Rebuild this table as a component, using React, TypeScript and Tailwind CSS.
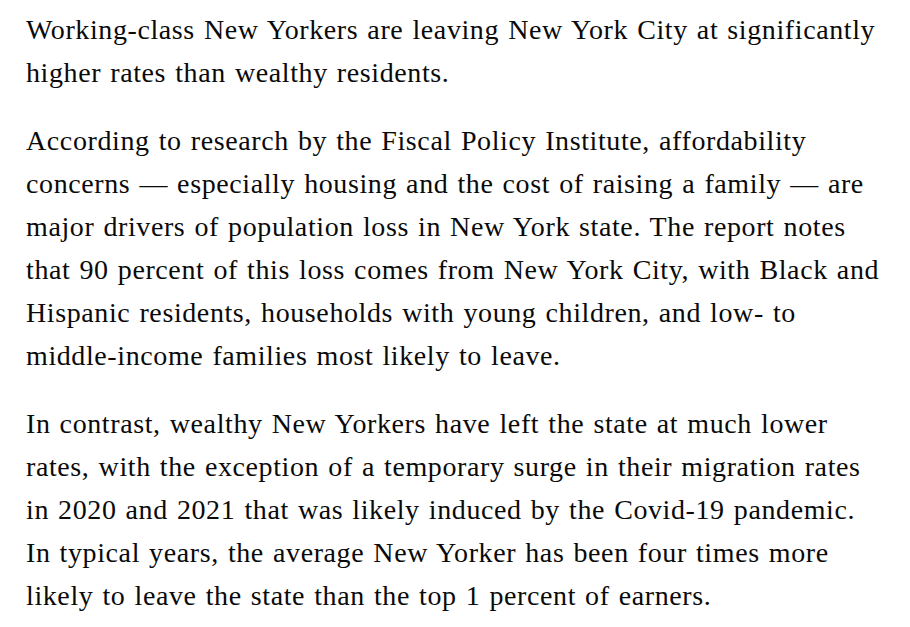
const paragraphs: string[][] = [
  [
    "Working-class New Yorkers are leaving New York City at significantly",
    "higher rates than wealthy residents.",
  ],
  [
    "According to research by the Fiscal Policy Institute, affordability",
    "concerns — especially housing and the cost of raising a family — are",
    "major drivers of population loss in New York state. The report notes",
    "that 90 percent of this loss comes from New York City, with Black and",
    "Hispanic residents, households with young children, and low- to",
    "middle-income families most likely to leave.",
  ],
  [
    "In contrast, wealthy New Yorkers have left the state at much lower",
    "rates, with the exception of a temporary surge in their migration rates",
    "in 2020 and 2021 that was likely induced by the Covid-19 pandemic.",
    "In typical years, the average New Yorker has been four times more",
    "likely to leave the state than the top 1 percent of earners.",
  ],
];

export default function App() {
  return (
    <div className="min-h-screen w-full bg-white">
      <article className="flex flex-col gap-[25px] pl-[26px] pt-[8px] font-['Liberation_Serif',serif] text-[28px] leading-[43px] tracking-[0.6px] [word-spacing:1.5px] text-[#0a0a0a]">
        {paragraphs.map((lines, i) => (
          <p key={i}>
            {lines.map((line, j) => (
              <span key={j} className="block whitespace-nowrap">
                {line}
              </span>
            ))}
          </p>
        ))}
      </article>
    </div>
  );
}
